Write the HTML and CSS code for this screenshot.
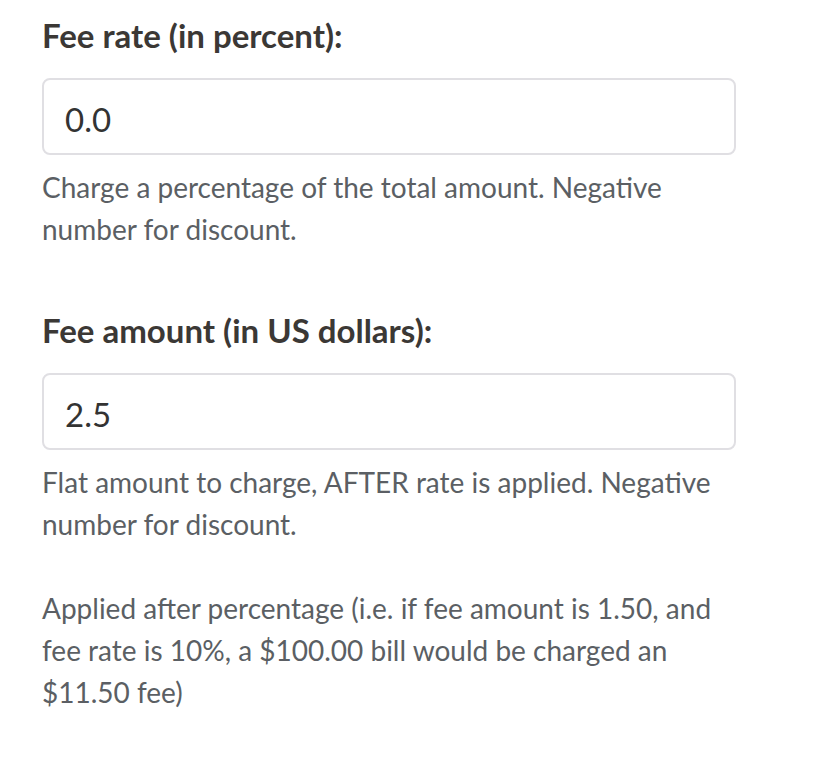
FILE: index.html
```html
<html>
<head>
    <meta name="viewport" content="width=device-width">
    <title>Fee settings</title>
    <link rel="stylesheet" href="styles.css">
</head>
<body>

<div class="fees">
    <div class="field">
        <label class="field-label" for="fee-rate">Fee rate (in percent):</label>
        <input class="field-input" id="fee-rate" type="text" value="0.0">
        <p class="field-help">Charge a percentage of the total amount. Negative number for discount.</p>
    </div>

    <div class="field">
        <label class="field-label" for="fee-amount">Fee amount (in US dollars):</label>
        <input class="field-input" id="fee-amount" type="text" value="2.5">
        <p class="field-help">Flat amount to charge, AFTER rate is applied. Negative number for discount.</p>
        <p class="field-help">Applied after percentage (i.e. if fee amount is 1.50, and fee rate is 10%, a $100.00 bill would be charged an $11.50 fee)</p>
    </div>
</div>

</body>
</html>
```

FILE: styles.css
```css
body {
    margin: 0;
    padding: 0;
    background: #fff;
    font-family: Lato, "Open Sans", sans-serif;
}

.fees {
    width: 694px;
    padding: 15px 0 0 42px;
}

.field {
    margin-bottom: 60px;
}

.field-label {
    display: block;
    font-size: 33px;
    font-weight: 700;
    line-height: 40px;
    color: #3b3835;
}

.field-input {
    display: block;
    box-sizing: border-box;
    width: 100%;
    height: 77px;
    margin-top: 23px;
    padding: 4px 21px 0;
    border: 2px solid #e0dfe3;
    border-radius: 8px;
    font-family: inherit;
    font-size: 33px;
    color: #333;
    outline: none;
}

.field-help {
    margin: 11px 0 0;
    font-size: 28px;
    line-height: 42px;
    color: #5b5f64;
}

.field-help + .field-help {
    margin-top: 42px;
}
```
